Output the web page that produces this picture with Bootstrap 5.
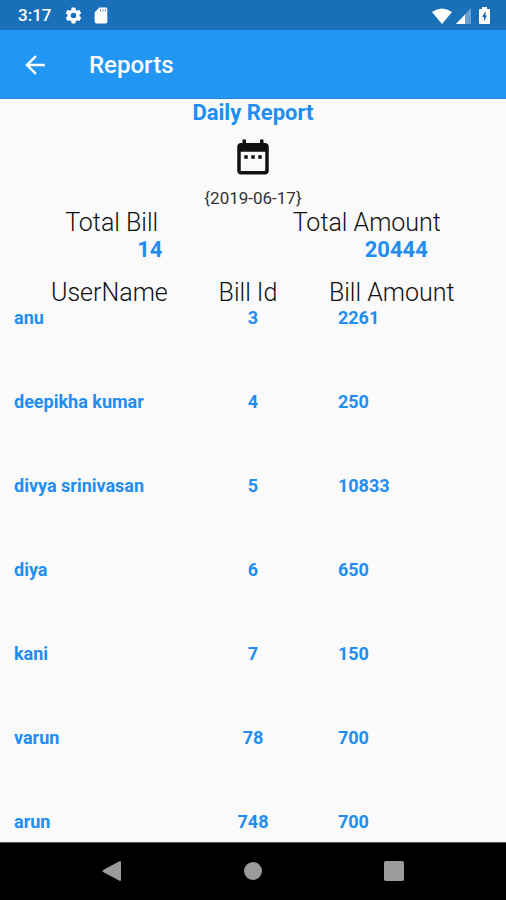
<!DOCTYPE html>
<html lang="en">
<head>
<meta charset="utf-8">
<meta name="viewport" content="width=device-width, initial-scale=1">
<title>Reports</title>
<link href="https://cdn.jsdelivr.net/npm/bootstrap@5.3.0/dist/css/bootstrap.min.css" rel="stylesheet">
<style>
  body { font-family: Roboto, "Liberation Sans", sans-serif; background: #fafafa; color: #111; }
  svg { display: block; fill: currentColor; }
  .status-bar { height: 30px; background: #1a70b8; padding: 1px 16px 0 18px; font-size: 17px; line-height: 29px; }
  .clock { margin-right: 13px; }
  .app-bar { height: 69px; background: #2196f3; padding: 2px 24px 0; gap: 43px; border-bottom: 1px solid #1e88e0; }
  .app-title { font-size: 24px; line-height: 30px; }
  .accent { color: #228df0; }
  .report { min-height: 0; padding-top: 1px; }
  .report-title { font-size: 22px; line-height: 26px; }
  .date-button { padding: 10px 0; color: #111; }
  .report-date { font-size: 17px; line-height: 20px; padding-bottom: 1px; color: #333; }
  .label-text { font-size: 25px; line-height: 28px; font-weight: 300; }
  .total-value { font-size: 22px; line-height: 26px; padding-left: 72px; }
  .bills { table-layout: fixed; }
  .bills th, .bills td { padding: 0; vertical-align: top; }
  .bills td { font-size: 18px; line-height: 22px; height: 84px; }
  .bills th:first-child { padding-left: 51px; }
  .bills td:first-child { padding-left: 14px; }
  .bills th:nth-child(2) { padding-right: 10px; }
  .bills td:last-child { padding-left: 9px; }
  .col-side { width: 35%; }
  .nav-bar { height: 58px; background: #000; border-top: 1px solid #555; padding: 0 42px 2px; color: #9b9b9b; }
</style>
</head>
<body>
<div class="vh-100 d-flex flex-column overflow-hidden">
  <div class="status-bar d-flex align-items-center flex-shrink-0 text-white fw-medium">
    <span class="clock">3:17</span>
    <svg width="19" height="19" viewBox="0 0 24 24" aria-hidden="true"><path d="M19.43 12.98c.04-.32.07-.64.07-.98s-.03-.66-.07-.98l2.11-1.65c.19-.15.24-.42.12-.64l-2-3.46c-.12-.22-.39-.3-.61-.22l-2.49 1c-.52-.4-1.08-.73-1.69-.98l-.38-2.65A.49.49 0 0 0 14 2h-4c-.25 0-.46.18-.49.42l-.38 2.65c-.61.25-1.17.59-1.69.98l-2.49-1c-.23-.09-.49 0-.61.22l-2 3.46c-.13.22-.07.49.12.64l2.11 1.65c-.04.32-.07.65-.07.98s.03.66.07.98l-2.11 1.65c-.19.15-.24.42-.12.64l2 3.46c.12.22.39.3.61.22l2.49-1c.52.4 1.08.73 1.69.98l.38 2.65c.03.24.24.42.49.42h4c.25 0 .46-.18.49-.42l.38-2.65c.61-.25 1.17-.59 1.69-.98l2.49 1c.23.09.49 0 .61-.22l2-3.46c.12-.22.07-.49-.12-.64l-2.11-1.65zM12 15.500A3.500 3.500 0 1 1 12 8.500a3.500 3.500 0 0 1 0 7z"/></svg>
    <svg class="ms-2" width="20" height="19" viewBox="0 0 24 24" aria-hidden="true"><path d="M18 2h-8L4.020 8 4 20c0 1.100.9 2 2 2h12c1.100 0 2-.9 2-2V4c0-1.100-.9-2-2-2zm-6 5h-1V4h1v3zm3 0h-1V4h1v3zm3 0h-1V4h1v3z"/></svg>
    <svg class="ms-auto" width="20" height="16" viewBox="0 0 20 16" aria-hidden="true"><path d="M0 4Q10-3 20 4L10 16z"/></svg>
    <svg class="ms-1" width="15" height="16" viewBox="0 0 15 16" aria-hidden="true"><path opacity=".35" d="M15 0v16H0z"/><path d="M9 6.400V16H0z"/></svg>
    <svg class="ms-2" width="11" height="17" viewBox="0 0 11 17" aria-hidden="true"><path fill-rule="evenodd" d="M3 0h5v2h2q1 0 1 1v13q0 1-1 1H1q-1 0-1-1V3q0-1 1-1h2zM6.500 4 3 10H5v4.500L8 8.500H6.500z"/></svg>
  </div>

  <header class="app-bar d-flex align-items-center flex-shrink-0 text-white">
    <button type="button" class="btn p-0 border-0 text-white" aria-label="Back">
      <svg width="22" height="22" viewBox="3 3 18 18" aria-hidden="true"><path d="M20 11H7.830l5.590-5.590L12 4l-8 8 8 8 1.410-1.410L7.830 13H20z"/></svg>
    </button>
    <h1 class="app-title fw-medium mb-0">Reports</h1>
  </header>

  <main class="report flex-fill overflow-hidden">
    <h2 class="report-title accent fw-bold text-center mb-0">Daily Report</h2>
    <button type="button" class="date-button btn d-block mx-auto border-0" aria-label="Choose date">
      <svg width="42" height="42" viewBox="0 0 24 24" aria-hidden="true"><path d="M9 11H7v2h2v-2zm4 0h-2v2h2v-2zm4 0h-2v2h2v-2zm2-7h-1V2h-2v2H8V2H6v2H5c-1.110 0-1.990.9-1.990 2L3 20c0 1.100.89 2 2 2h14c1.100 0 2-.9 2-2V6c0-1.100-.9-2-2-2zm0 16H5V9h14v11z"/></svg>
    </button>
    <p class="report-date text-center mb-0">{2019-06-17}</p>

    <dl class="d-flex justify-content-around mb-3">
      <div>
        <dt class="label-text">Total Bill</dt>
        <dd class="total-value accent fw-bold mb-0">14</dd>
      </div>
      <div>
        <dt class="label-text">Total Amount</dt>
        <dd class="total-value accent fw-bold mb-0">20444</dd>
      </div>
    </dl>

    <table class="bills w-100">
      <colgroup><col class="col-side"><col><col class="col-side"></colgroup>
      <thead>
        <tr class="label-text"><th class="fw-light" scope="col">UserName</th><th class="fw-light text-center" scope="col">Bill Id</th><th class="fw-light" scope="col">Bill Amount</th></tr>
      </thead>
      <tbody class="accent fw-bold">
        <tr><td>anu</td><td class="text-center">3</td><td>2261</td></tr>
        <tr><td>deepikha kumar</td><td class="text-center">4</td><td>250</td></tr>
        <tr><td>divya srinivasan</td><td class="text-center">5</td><td>10833</td></tr>
        <tr><td>diya</td><td class="text-center">6</td><td>650</td></tr>
        <tr><td>kani</td><td class="text-center">7</td><td>150</td></tr>
        <tr><td>varun</td><td class="text-center">78</td><td>700</td></tr>
        <tr><td>arun</td><td class="text-center">748</td><td>700</td></tr>
      </tbody>
    </table>
  </main>

  <nav class="nav-bar d-flex justify-content-around align-items-center flex-shrink-0" aria-label="System">
    <button type="button" class="btn p-0 border-0 text-reset" aria-label="Back"><svg width="20" height="20" viewBox="0 0 20 20"><path d="M18 0q1 0 1 1v18q0 1-1 1L1 11q-1-1 0-2z"/></svg></button>
    <button type="button" class="btn p-0 border-0 text-reset" aria-label="Home"><svg width="20" height="20" viewBox="0 0 20 20"><circle cx="10" cy="10" r="9"/></svg></button>
    <button type="button" class="btn p-0 border-0 text-reset" aria-label="Recent apps"><svg width="20" height="20" viewBox="0 0 20 20"><rect width="20" height="20" rx="2"/></svg></button>
  </nav>
</div>
</body>
</html>
